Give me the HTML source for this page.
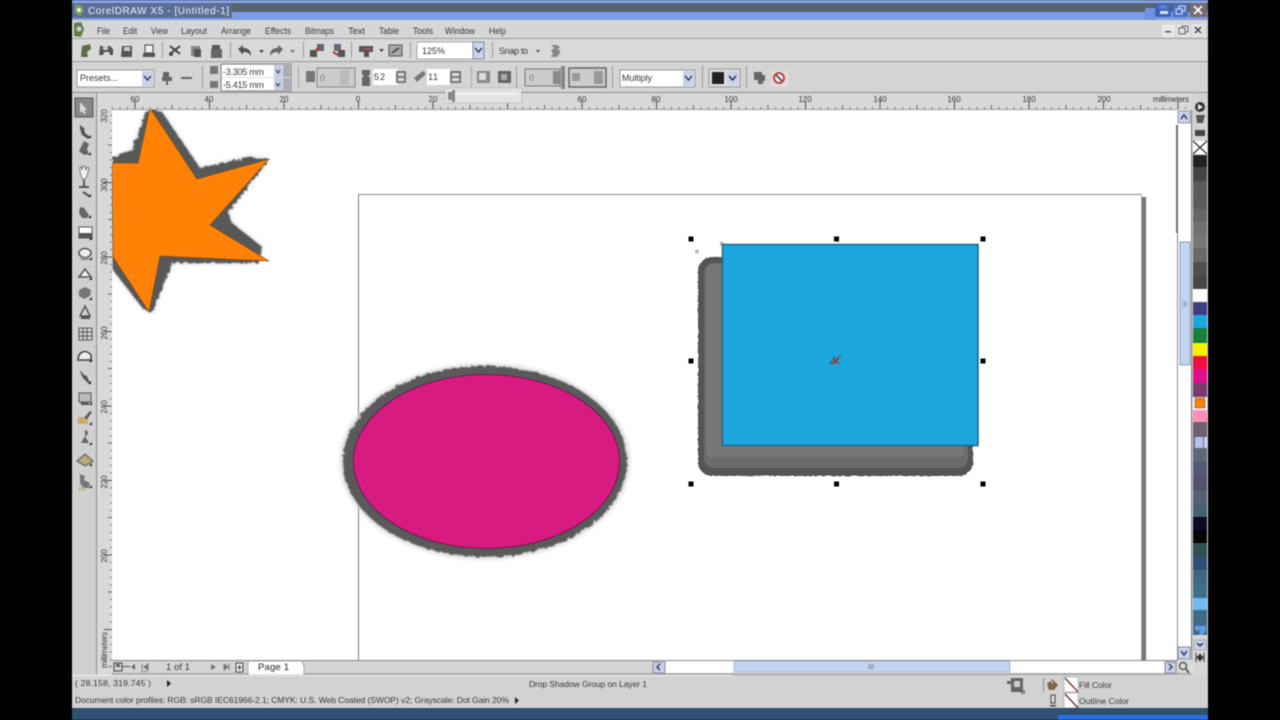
<!DOCTYPE html>
<html><head><meta charset="utf-8"><title>CorelDRAW X5</title>
<style>
html,body{margin:0;padding:0;background:#000;width:1280px;height:720px;overflow:hidden}
svg{display:block;filter:blur(.5px)}
text{font-family:"Liberation Sans",sans-serif;font-size:9px;fill:#383838}
.g{fill:#555}.d{fill:#444}.l{fill:#8a8a8a}
.s{stroke:#a0a0a0;stroke-width:1}
</style></head><body>
<svg width="1280" height="720" viewBox="0 0 1280 720" xmlns="http://www.w3.org/2000/svg">
<defs>
<filter id="rough" x="-10%" y="-10%" width="120%" height="120%">
<feTurbulence type="fractalNoise" baseFrequency=".25" numOctaves="2" seed="4"/>
<feDisplacementMap in="SourceGraphic" scale="5"/>
<feGaussianBlur stdDeviation=".5"/>
</filter>
<filter id="rough2" x="-5%" y="-5%" width="110%" height="110%">
<feTurbulence type="fractalNoise" baseFrequency=".4" numOctaves="2" seed="7"/>
<feDisplacementMap in="SourceGraphic" scale="2"/>
</filter>
<filter id="soft" x="-10%" y="-10%" width="120%" height="120%"><feGaussianBlur stdDeviation="2.5"/></filter>
<clipPath id="cv"><rect x="112" y="110" width="1066" height="550"/></clipPath>
<pattern id="rh" width="74.5" height="18" patternUnits="userSpaceOnUse" patternTransform="translate(358,92)">
<rect x="0" y="9" width="1" height="8" fill="#555"/><rect x="37" y="13" width="1" height="4" fill="#666"/>
<rect x="7.5" y="15" width="1" height="2" fill="#777"/><rect x="15" y="15" width="1" height="2" fill="#777"/><rect x="22.5" y="15" width="1" height="2" fill="#777"/><rect x="30" y="15" width="1" height="2" fill="#777"/><rect x="44.5" y="15" width="1" height="2" fill="#777"/><rect x="52" y="15" width="1" height="2" fill="#777"/><rect x="59.5" y="15" width="1" height="2" fill="#777"/><rect x="67" y="15" width="1" height="2" fill="#777"/>
</pattern>
<pattern id="rv" width="16" height="74.5" patternUnits="userSpaceOnUse" patternTransform="translate(96,182)">
<rect x="8" y="0" width="8" height="1" fill="#555"/><rect x="12" y="37" width="4" height="1" fill="#666"/>
<rect x="14" y="7.5" width="2" height="1" fill="#777"/><rect x="14" y="15" width="2" height="1" fill="#777"/><rect x="14" y="22.5" width="2" height="1" fill="#777"/><rect x="14" y="30" width="2" height="1" fill="#777"/><rect x="14" y="44.5" width="2" height="1" fill="#777"/><rect x="14" y="52" width="2" height="1" fill="#777"/><rect x="14" y="59.5" width="2" height="1" fill="#777"/><rect x="14" y="67" width="2" height="1" fill="#777"/>
</pattern>
</defs>

<rect width="1280" height="720" fill="#000"/>
<rect x="72" y="0" width="1136" height="720" fill="#d3d3d3"/>

<!-- title bar -->
<rect x="72" y="0" width="1136" height="3" fill="#86a5ea"/>
<rect x="72" y="3" width="1136" height="9" fill="#56636f"/>
<rect x="72" y="12" width="1136" height="8" fill="#7c9ce8"/>
<rect x="72" y="3" width="160" height="15" fill="#5b6f94"/>
<rect x="1145" y="8" width="10" height="12" fill="#6f93e0"/>
<path d="M75 4l7 2 2 5-4 5-5-3z" fill="#7da05a"/><circle cx="79" cy="10" r="2" fill="#eee"/>
<text x="88" y="14" style="font-size:10px;fill:#eef" textLength="141">CorelDRAW X5 - [Untitled-1]</text>
<rect x="1155" y="4" width="16" height="13" fill="#3f62b4"/><rect x="1160" y="11" width="8" height="3" fill="#dde"/><rect x="1159" y="5" width="8" height="4" fill="#5a7fd0"/>
<rect x="1173" y="4" width="15" height="13" fill="#4a6fc4"/><rect x="1179" y="6" width="6" height="5" fill="none" stroke="#dde"/><rect x="1176" y="9" width="6" height="5" fill="#4a6fc4" stroke="#dde"/>
<rect x="1190" y="3" width="17" height="14" fill="#7b6a70"/><path d="M1194 6l8 8M1202 6l-8 8" stroke="#fff" stroke-width="1.6"/>

<!-- menu bar -->
<rect x="72" y="20" width="1136" height="18" fill="#d6d6d6"/>
<path d="M74 23l7-1 3 7-3 8-7-1z" fill="#5f7d46"/><circle cx="79" cy="29" r="2.5" fill="#ccd"/>
<text x="97" y="34" style="font-size:9.5px" textLength="13" lengthAdjust="spacingAndGlyphs">File</text>
<text x="123" y="34" style="font-size:9.5px" textLength="14" lengthAdjust="spacingAndGlyphs">Edit</text>
<text x="151" y="34" style="font-size:9.5px" textLength="17" lengthAdjust="spacingAndGlyphs">View</text>
<text x="181" y="34" style="font-size:9.5px" textLength="26" lengthAdjust="spacingAndGlyphs">Layout</text>
<text x="221" y="34" style="font-size:9.5px" textLength="30" lengthAdjust="spacingAndGlyphs">Arrange</text>
<text x="265" y="34" style="font-size:9.5px" textLength="26" lengthAdjust="spacingAndGlyphs">Effects</text>
<text x="305" y="34" style="font-size:9.5px" textLength="29" lengthAdjust="spacingAndGlyphs">Bitmaps</text>
<text x="348" y="34" style="font-size:9.5px" textLength="17" lengthAdjust="spacingAndGlyphs">Text</text>
<text x="379" y="34" style="font-size:9.5px" textLength="20" lengthAdjust="spacingAndGlyphs">Table</text>
<text x="413" y="34" style="font-size:9.5px" textLength="20" lengthAdjust="spacingAndGlyphs">Tools</text>
<text x="445" y="34" style="font-size:9.5px" textLength="30" lengthAdjust="spacingAndGlyphs">Window</text>
<text x="489" y="34" style="font-size:9.5px" textLength="17" lengthAdjust="spacingAndGlyphs">Help</text>
<rect x="1162" y="24" width="13" height="13" fill="#e9e6ea"/><rect x="1165" y="31" width="6" height="1.5" fill="#555"/>
<rect x="1177" y="24" width="13" height="13" fill="#e4e4e6"/><rect x="1182" y="26" width="6" height="6" fill="none" stroke="#666"/><rect x="1179" y="28" width="6" height="6" fill="#e4e4e6" stroke="#666"/>
<rect x="1192" y="24" width="13" height="13" fill="#e2e2e4"/><path d="M1195 27l6 6M1201 27l-6 6" stroke="#444" stroke-width="1.5"/>

<!-- toolbar 1 -->
<rect x="72" y="38" width="1136" height="1" fill="#9e9e9e"/>
<rect x="72" y="39" width="1136" height="22" fill="#d9d9d9"/>
<rect x="72" y="61" width="1136" height="1" fill="#9a9a9a"/>
<path d="M82 46l8-2 1 5-4 3 1 5-7 0z" fill="#5c6b4a"/>
<path d="M100 46h10l3 3v6h-3l-1-3h-5l-1 3h-4z" class="g"/><rect x="103" y="46" width="5" height="4" fill="#ccc"/>
<path d="M122 46h10v11h-11z" class="g"/><rect x="124" y="47" width="6" height="4" fill="#ccc"/>
<rect x="143" y="53" width="12" height="4" class="g"/><rect x="145" y="45" width="8" height="8" fill="#eee" stroke="#444"/>
<rect x="162" y="42" width="1" height="16" fill="#999"/>
<path d="M170 46l10 8M180 46l-10 8" stroke="#444" stroke-width="2"/><circle cx="171" cy="54" r="2" class="d"/>
<rect x="191" y="46" width="9" height="10" class="l"/><rect x="194" y="49" width="7" height="8" fill="#555"/>
<rect x="212" y="45" width="8" height="5" class="g"/><rect x="211" y="49" width="11" height="9" fill="#666"/>
<rect x="230" y="42" width="1" height="16" fill="#999"/>
<path d="M238 49l5-4v3c6 0 8 3 8 8-2-3-4-4-8-4v3z" class="g"/><path d="M259 50h5l-2.500 3z" class="d"/>
<path d="M283 49l-5-4v3c-6 0-8 3-8 8 2-3 4-4 8-4v3z" fill="#666"/><path d="M290 50h5l-2.500 3z" fill="#777"/>
<rect x="303" y="42" width="1" height="16" fill="#999"/>
<rect x="317" y="44" width="7" height="7" fill="#667"/><rect x="310" y="50" width="7" height="7" fill="#555"/><path d="M316 50l3-3" stroke="#b33" stroke-width="2"/>
<rect x="334" y="44" width="7" height="7" fill="#667"/><rect x="338" y="50" width="7" height="7" fill="#555"/><path d="M333 52l5 3" stroke="#b33" stroke-width="2"/>
<rect x="351" y="42" width="1" height="16" fill="#999"/>
<path d="M359 46h14v6h-4v5h-5v-5h-5z" class="g"/><rect x="363" y="48" width="8" height="2" fill="#a55"/><path d="M379 49h5l-2.500 3z" class="d"/>
<rect x="389" y="45" width="13" height="11" fill="#aaa" stroke="#555"/><path d="M392 53l4-3 3-2" stroke="#555" stroke-width="2" fill="none"/>
<rect x="410" y="42" width="1" height="16" fill="#999"/>
<rect x="417" y="42" width="56" height="17" fill="#fff" stroke="#aaa"/>
<text x="422" y="54" textLength="23">125%</text>
<rect x="473" y="42" width="11" height="17" fill="#cbd3ea" stroke="#889"/><path d="M475 48l3.500 4 3.500-4" fill="none" stroke="#345" stroke-width="1.5"/>
<rect x="492" y="42" width="1" height="16" fill="#999"/>
<text x="499" y="54" textLength="29">Snap to</text>
<path d="M536 50h4l-2 2.500z" class="d"/>
<path d="M551 45h6l3 2-3 3h3v3l-3 4h-6l2-4-2-2 3-3z" fill="#888"/>

<!-- toolbar 2 -->
<rect x="72" y="62" width="1136" height="30" fill="#d4d4d4"/>
<rect x="77" y="70" width="77" height="17" fill="#fff" stroke="#999"/>
<text x="80" y="81" textLength="38">Presets...</text>
<rect x="142" y="71" width="11" height="15" fill="#c9d1e8"/><path d="M144 76l3.500 4 3.500-4" fill="none" stroke="#345" stroke-width="1.5"/>
<path d="M163 72h6v5h3v4h-4v4h-2v-4h-4v-4h1z" fill="#666"/>
<rect x="181" y="77" width="11" height="2" fill="#666"/>
<rect x="202" y="66" width="1" height="22" fill="#999"/>
<rect x="210" y="66" width="8" height="8" fill="#777"/><rect x="210" y="81" width="8" height="7" fill="#777"/>
<rect x="221" y="64" width="70" height="27" fill="#ddd" stroke="#888"/>
<rect x="222" y="65" width="52" height="12" fill="#fff"/><rect x="222" y="78" width="52" height="12" fill="#fff"/>
<text x="223" y="75" textLength="41">-3.305 mm</text>
<text x="223" y="88" textLength="41">-5.415 mm</text>
<rect x="274" y="65" width="8" height="12" fill="#c2cbe4"/><rect x="274" y="78" width="8" height="12" fill="#c2cbe4"/>
<rect x="283" y="65" width="7" height="12" fill="#aab"/><rect x="283" y="78" width="7" height="12" fill="#aab"/>
<path d="M276 70l2 3 2-3M276 83l2 3 2-3" stroke="#234" fill="none"/>
<rect x="298" y="66" width="1" height="22" fill="#aaa"/>
<rect x="306" y="71" width="9" height="11" fill="#777"/>
<rect x="317" y="68" width="38" height="19" fill="#ccc" stroke="#888"/><rect x="340" y="70" width="9" height="15" fill="#bbb"/>
<text x="320" y="81" style="fill:#777">0</text>
<path d="M362 70h8v4l-2 3h2v9h-8v-9h2l-2-3z" fill="#666"/>
<rect x="373" y="69" width="25" height="16" fill="#fff"/><text x="374" y="80" textLength="11">52</text>
<rect x="396" y="71" width="10" height="12" fill="#777"/><rect x="398" y="73" width="6" height="3" fill="#ddd"/><rect x="398" y="78" width="6" height="3" fill="#ddd"/>
<path d="M414 78l9-7 3 3-9 8z" fill="#777"/>
<rect x="427" y="69" width="23" height="16" fill="#fff"/><text x="428" y="80" textLength="10">11</text>
<rect x="450" y="71" width="11" height="12" fill="#777"/><rect x="452" y="73" width="7" height="3" fill="#ddd"/><rect x="452" y="78" width="7" height="3" fill="#ddd"/>
<rect x="471" y="66" width="1" height="22" fill="#aaa"/>
<rect x="477" y="71" width="13" height="12" fill="#888"/><rect x="479" y="73" width="7" height="7" fill="#ddd"/>
<rect x="498" y="71" width="13" height="12" fill="#666"/><rect x="501" y="74" width="6" height="6" fill="#aaa"/>
<rect x="516" y="66" width="1" height="22" fill="#999"/>
<rect x="525" y="69" width="35" height="17" fill="#ccc" stroke="#777"/><rect x="553" y="71" width="7" height="13" fill="#888"/><text x="529" y="81" style="fill:#777">0</text>
<rect x="561" y="66" width="4" height="23" fill="#888"/>
<rect x="569" y="68" width="37" height="19" fill="#ccc" stroke="#666" stroke-width="1.500"/><rect x="594" y="71" width="9" height="13" fill="#999"/><rect x="572" y="73" width="8" height="8" fill="#999"/>
<rect x="612" y="66" width="1" height="22" fill="#999"/>
<rect x="620" y="70" width="75" height="17" fill="#fff" stroke="#999"/>
<text x="622" y="81" textLength="30">Multiply</text>
<rect x="683" y="71" width="11" height="15" fill="#c9d1e8"/><path d="M685 76l3.500 4 3.500-4" fill="none" stroke="#345" stroke-width="1.5"/>
<rect x="702" y="66" width="1" height="22" fill="#999"/>
<rect x="709" y="69" width="31" height="18" fill="#ddd" stroke="#999"/>
<rect x="712" y="72" width="12" height="12" fill="#222"/>
<rect x="727" y="71" width="11" height="14" fill="#c9d1e8"/><path d="M729 76l3.500 4 3.500-4" fill="none" stroke="#235" stroke-width="1.5"/>
<rect x="746" y="66" width="1" height="22" fill="#999"/>
<path d="M754 72h8v3h3v6h-2v3h-5v-4h-4z" fill="#666"/>
<rect x="771" y="70" width="17" height="17" fill="#e4d8d8"/><circle cx="779" cy="78" r="5" fill="#eee" stroke="#b33" stroke-width="1.800"/><path d="M776 75l6 6" stroke="#333" stroke-width="1.500"/>

<!-- ruler -->
<rect x="72" y="92" width="1136" height="1" fill="#8e8e8e"/>
<rect x="96" y="93" width="1096" height="16" fill="#d8d8d8"/>
<rect x="112" y="92" width="1080" height="17" fill="url(#rh)"/>
<rect x="96" y="109" width="1082" height="1" fill="#999"/>
<g text-anchor="middle">
<text x="135" y="102" style="font-size:8px">60</text><text x="209" y="102" style="font-size:8px">40</text><text x="284" y="102" style="font-size:8px">20</text><text x="358" y="102" style="font-size:8px">0</text><text x="433" y="102" style="font-size:8px">20</text><text x="582" y="102" style="font-size:8px">60</text><text x="656" y="102" style="font-size:8px">80</text><text x="731" y="102" style="font-size:8px">100</text><text x="805" y="102" style="font-size:8px">120</text><text x="880" y="102" style="font-size:8px">140</text><text x="954" y="102" style="font-size:8px">160</text><text x="1029" y="102" style="font-size:8px">180</text><text x="1104" y="102" style="font-size:8px">200</text>
</g>
<text x="1153" y="102" style="font-size:8px" textLength="36">millimeters</text>
<rect x="445" y="88" width="77" height="15" fill="#e2e2e2" stroke="#aaa" stroke-dasharray="1 1"/>
<rect x="452" y="93" width="66" height="2" fill="#f2f2f2"/>
<path d="M448 92h4v-2h3v12h-3v-2h-4z" fill="#888"/>

<!-- left ruler and toolbox -->
<rect x="72" y="93" width="24" height="582" fill="#d0d0d0"/>
<rect x="96" y="93" width="1" height="582" fill="#8c8c8c"/>
<rect x="97" y="109" width="15" height="566" fill="#d8d8d8"/>
<rect x="96" y="109" width="16" height="563" fill="url(#rv)"/>
<text transform="translate(107,116) rotate(-90)" style="font-size:8px" text-anchor="middle">320</text>
<text transform="translate(107,185) rotate(-90)" style="font-size:8px" text-anchor="middle">300</text>
<text transform="translate(107,258) rotate(-90)" style="font-size:8px" text-anchor="middle">280</text>
<text transform="translate(107,333) rotate(-90)" style="font-size:8px" text-anchor="middle">260</text>
<text transform="translate(107,407) rotate(-90)" style="font-size:8px" text-anchor="middle">240</text>
<text transform="translate(107,482) rotate(-90)" style="font-size:8px" text-anchor="middle">220</text>
<text transform="translate(107,556) rotate(-90)" style="font-size:8px" text-anchor="middle">200</text>
<text transform="translate(107,668) rotate(-90)" style="font-size:8px" textLength="36">millimeters</text>
<rect x="75" y="98" width="18" height="19" fill="#888" stroke="#555"/><path d="M80 102l7 8-3 0 2 3-2 1-2-3-2 2z" fill="#ddd"/>
<g>
<path d="M80 125l4 3 1 5 5 4-2 2-6-4-2-6z" class="g"/><path d="M88 138h3v-3z" fill="#222"/>
<path d="M84 141l5 3-2 5 2 5-5 1-5-4z" fill="#666"/><path d="M88 155h3v-3z" fill="#222"/>
<path d="M80 172v-5h2v3l1-4h2l1 4 1-3 2 1-2 8-2 3h-3z" fill="#f0f0f0" stroke="#555" stroke-width=".7"/>
<path d="M84 180v8M79 187h10M83 192l6 4" stroke="#555" stroke-width="2" fill="none"/><path d="M88 197h3v-3z" fill="#222"/>
<path d="M80 207l4 1 5 7-2 3h-5l-3-5z" fill="#666"/><path d="M88 218h3v-3z" fill="#222"/>
<rect x="79" y="227" width="13" height="11" fill="#fff" stroke="#555"/><rect x="79" y="233" width="13" height="5" class="g"/><path d="M89 240h3v-3z" fill="#222"/>
<ellipse cx="85" cy="253" rx="6" ry="4.500" fill="#eee" stroke="#555" stroke-width="1.500"/><rect x="81" y="257" width="8" height="3" class="l"/><path d="M89 260h3v-3z" fill="#222"/>
<path d="M79 277l6-8 6 8z" fill="#eee" stroke="#555" stroke-width="1.500"/><path d="M89 280h3v-3z" fill="#222"/>
<path d="M79 290l6-3 6 3-1 6-6 3-5-3z" fill="#777"/><path d="M89 300h3v-3z" fill="#222"/>
<path d="M85 306l5 10H80z" fill="none" stroke="#555" stroke-width="1.500"/><rect x="81" y="316" width="9" height="3" class="g"/>
<path d="M79 328h13v12H79zM79 332h13M79 336h13M83 328v12M87 328v12" fill="none" stroke="#555"/>
<path d="M78 361c0-10 8-12 13-6v5H78z" fill="#eee" stroke="#444" stroke-width="1.500"/><path d="M89 362h3v-3z" fill="#222"/>
<path d="M80 370l4 5 3 1 2 5 2 1-3 1-5-5-2-4z" fill="#555"/><path d="M88 384h3v-3z" fill="#222"/>
<rect x="79" y="393" width="12" height="9" fill="#bbb" stroke="#555"/><rect x="81" y="402" width="8" height="3" class="g"/><path d="M89 405h3v-3z" fill="#222"/>
<path d="M78 417h10v7H78z" fill="#c9ac6c"/><path d="M84 418l6-7 2 1-5 7z" fill="#555"/><path d="M89 425h3v-3z" fill="#222"/>
<path d="M85 430a3 3 0 1 1 0 6l4 7H81l4-7z" fill="#666"/><path d="M89 445h3v-3z" fill="#222"/>
<path d="M77 461l8-7 8 7-8 5z" fill="#b9a878" stroke="#555"/><path d="M89 466h3v-3z" fill="#222"/>
<path d="M80 474l5 2-1 4 6 3-1 5h-6l-3-5z" fill="#777"/><path d="M78 489l8 0" stroke="#c9b98a" stroke-width="3"/><path d="M89 488h3v-3z" fill="#222"/>
</g>

<!-- canvas -->
<rect x="112" y="110" width="1066" height="550" fill="#fff"/>
<rect x="1178" y="110" width="14" height="550" fill="#fff"/>

<!-- page -->
<rect x="358" y="194" width="1" height="466" fill="#777"/>
<rect x="358" y="194" width="783" height="1" fill="#888"/>
<rect x="1141" y="194" width="1" height="466" fill="#aaa"/>
<rect x="1142" y="197" width="4" height="464" fill="#747474"/>

<!-- star -->
<g clip-path="url(#cv)">
<polygon points="150,108 162,112 200,168 249,157 269,159 228,213 232,223 262,247 258,263 172,263 152,312 144,310 113,270 113,158 132,150 144,117" fill="#ccc" filter="url(#soft)"/>
<polygon points="150,108 162,112 200,168 249,157 269,159 228,213 232,223 262,247 258,263 172,263 152,312 144,310 113,270 113,158 132,150 144,117" fill="#585858" filter="url(#rough)"/>
<polygon points="150,108 197,179 269,159 210,225 269,261 160,256 149,312 113,257 112,163 138,163" fill="#ff8207" stroke="#7a4a1a" stroke-width=".7"/>
</g>

<!-- ellipse -->
<ellipse cx="485" cy="461.500" rx="144" ry="97" fill="#ccc" filter="url(#soft)"/>
<ellipse cx="485" cy="461.500" rx="142" ry="95.500" fill="#5a5a5a" filter="url(#rough)"/>
<ellipse cx="486.500" cy="461.500" rx="133" ry="87" fill="#d81b80" stroke="#6a1050" stroke-width=".8"/>

<!-- rectangle -->
<rect x="698" y="257" width="275" height="219" rx="14" fill="#555" filter="url(#rough2)"/>
<rect x="704" y="263" width="264" height="205" rx="10" fill="#6c6c6c"/>
<rect x="706" y="264" width="258" height="193" rx="6" fill="#777"/>
<rect x="722.500" y="244.500" width="255.500" height="201" fill="#1ca6de" stroke="#1d6a85" stroke-width="1.500"/>
<path d="M835 356l-5 8M841 355l-10 9" stroke="#556" stroke-width="1"/><path d="M833 358l6 6M839 358l-6 6" stroke="#a33" stroke-width="1.500"/>
<circle cx="697" cy="251.500" r="1.300" fill="none" stroke="#666" stroke-width=".7"/>
<circle cx="722" cy="244" r="1.500" fill="none" stroke="#666" stroke-width=".7"/>
<g fill="#000">
<rect x="688.500" y="236.500" width="5" height="5"/><rect x="834" y="236.500" width="5" height="5"/><rect x="980.500" y="236.500" width="5" height="5"/>
<rect x="688.500" y="358.500" width="5" height="5"/><rect x="980.500" y="358.500" width="5" height="5"/>
<rect x="688.500" y="481.500" width="5" height="5"/><rect x="834" y="481.500" width="5" height="5"/><rect x="980.500" y="481.500" width="5" height="5"/>
</g>

<!-- vertical scrollbar -->
<rect x="1176" y="125" width="2" height="108" fill="#6e6e6e"/>
<rect x="1177" y="233" width="1" height="427" fill="#888"/>
<rect x="1178" y="111" width="12" height="12" fill="#c8d2ee" stroke="#99a"/><path d="M1181 119l3-4 3 4" fill="none" stroke="#345" stroke-width="1.500"/>
<rect x="1180" y="242" width="10" height="123" fill="#c2d6f4" stroke="#6a7a8a" stroke-width=".7"/>
<path d="M1183 302h4M1183 304h4M1183 306h4" stroke="#889" stroke-width="1"/>
<rect x="1178" y="647" width="12" height="12" fill="#c8d2ee" stroke="#889"/><path d="M1181 651l3 4 3-4" fill="none" stroke="#345" stroke-width="1.500"/>

<!-- horizontal scrollbar area -->
<rect x="112" y="660" width="1066" height="1" fill="#888"/>
<rect x="112" y="661" width="548" height="14" fill="#d4d4d4"/>
<rect x="660" y="661" width="505" height="12" fill="#fff"/>
<rect x="1165" y="661" width="27" height="15" fill="#d8d8d8"/>
<rect x="1190" y="661" width="3" height="15" fill="#ddd"/>
<rect x="734" y="661" width="276" height="11" fill="#c2d6f4" stroke="#8a98a8" stroke-width=".6"/>
<path d="M869 664v5M871 664v5M873 664v5" stroke="#889"/>
<rect x="112" y="673" width="1080" height="2" fill="#8a8a8a" opacity=".55"/>
<rect x="653" y="662" width="12" height="11" fill="#c8d0e8" stroke="#889"/><path d="M660 664l-3 3 3 3" fill="none" stroke="#345" stroke-width="1.500"/>
<rect x="1165" y="662" width="11" height="11" fill="#c8d0e8" stroke="#889"/><path d="M1169 664l3 3-3 3" fill="none" stroke="#345" stroke-width="1.500"/>
<circle cx="1183" cy="666" r="3.500" fill="none" stroke="#444" stroke-width="1.200"/><path d="M1186 669l3 4" stroke="#444" stroke-width="1.500"/>

<!-- page nav -->
<rect x="114" y="663" width="8" height="8" fill="none" stroke="#444"/><rect x="116" y="664" width="4" height="3" fill="#666"/>
<rect x="122" y="666" width="8" height="1" fill="#555"/><path d="M135 664l-4 3 4 3z" fill="#666"/>
<path d="M142 664v6M148 664l-4 3 4 3z" stroke="#777" fill="#777"/><rect x="141" y="671" width="7" height="1" fill="#888"/>
<text x="166" y="670" style="font-size:9.500px" textLength="24">1 of 1</text>
<path d="M211 664l5 3-5 3z" fill="#777"/><path d="M224 664l4 3-4 3zM229 664v6" fill="#777" stroke="#777"/>
<rect x="236" y="663" width="7" height="9" fill="#eee" stroke="#444"/><path d="M239.500 665v5M237.500 667.500h4" stroke="#333"/>
<path d="M248 661h54l2 6v8h-56z" fill="#fff" stroke="#999" stroke-width=".8"/>
<text x="258" y="670" style="font-size:9.500px;fill:#222" textLength="31">Page 1</text>
<rect x="72" y="675" width="660" height="1.500" fill="#f2f2f2"/>

<!-- palette -->
<rect x="1191" y="110" width="1" height="550" fill="#777"/>
<rect x="1192" y="93" width="16" height="47" fill="#d2d2d2"/>
<circle cx="1200" cy="107" r="5" fill="#333"/><path d="M1198 104l5 3-5 3z" fill="#eee"/>
<path d="M1196 115h9l-2 8h-6z" fill="#555"/>
<path d="M1195 130h10v6h-10zM1197 127l2 3" class="d"/>
<rect x="1193" y="141" width="14" height="13" fill="#fff"/><path d="M1193 141l14 13M1207 141l-14 13" stroke="#333" stroke-width="1.200"/>
<g>
<rect x="1193" y="155" width="14" height="12" fill="#222"/>
<rect x="1193" y="167" width="14" height="14" fill="#444"/>
<rect x="1193" y="181" width="14" height="14" fill="#5b5b5b"/>
<rect x="1193" y="195" width="14" height="14" fill="#5e5a60"/>
<rect x="1193" y="209" width="14" height="13" fill="#666"/>
<rect x="1193" y="222" width="14" height="13" fill="#707070"/>
<rect x="1193" y="235" width="14" height="13" fill="#777"/>
<rect x="1193" y="248" width="14" height="14" fill="#6a6a6a"/>
<rect x="1193" y="262" width="14" height="14" fill="#4f4f4f"/>
<rect x="1193" y="276" width="14" height="13" fill="#484848"/>
<rect x="1193" y="289" width="14" height="13" fill="#fff"/>
<rect x="1193" y="302" width="14" height="13" fill="#3f3f80"/>
<rect x="1193" y="315" width="14" height="13" fill="#1aa7e0"/>
<rect x="1193" y="328" width="14" height="15" fill="#1a8040"/>
<rect x="1193" y="343" width="14" height="13" fill="#ffee00"/>
<rect x="1193" y="356" width="14" height="13" fill="#f01040"/>
<rect x="1193" y="369" width="14" height="14" fill="#e0108c"/>
<rect x="1193" y="383" width="14" height="14" fill="#7a3a70"/>
<rect x="1193" y="397" width="14" height="13" fill="#fff"/>
<rect x="1195" y="398" width="10" height="10" fill="#ff8207" stroke="#555" stroke-width=".6"/>
<rect x="1193" y="410" width="14" height="12" fill="#ff8fb8"/>
<rect x="1193" y="422" width="14" height="15" fill="#6e5f72"/>
<rect x="1193" y="437" width="14" height="11" fill="#707080"/>
<rect x="1195" y="437" width="8" height="11" fill="#b8c0f0"/>
<rect x="1204" y="437" width="3" height="11" fill="#c8ccf0"/>
<rect x="1193" y="448" width="14" height="14" fill="#606878"/>
<rect x="1193" y="462" width="14" height="13" fill="#505a78"/>
<rect x="1193" y="475" width="14" height="15" fill="#554f70"/>
<rect x="1193" y="490" width="14" height="13" fill="#556070"/>
<rect x="1193" y="503" width="14" height="14" fill="#456070"/>
<rect x="1193" y="517" width="14" height="13" fill="#0a0a20"/>
<rect x="1193" y="530" width="14" height="13" fill="#050508"/>
<rect x="1193" y="543" width="14" height="14" fill="#2f4f50"/>
<rect x="1193" y="557" width="14" height="13" fill="#2f4f78"/>
<rect x="1193" y="570" width="14" height="13" fill="#3f6880"/>
<rect x="1193" y="583" width="14" height="15" fill="#407088"/>
<rect x="1193" y="598" width="14" height="12" fill="#70b8f0"/>
<rect x="1193" y="610" width="14" height="15" fill="#3f6a88"/>
<rect x="1193" y="625" width="14" height="10" fill="#3f6a88"/>
<path d="M1195 626h11v4l-3 5h-4l1-4-5-1z" fill="#5f9ee0"/>
</g>
<rect x="1193" y="635" width="14" height="41" fill="#d6d6d6"/>
<rect x="1194" y="640" width="12" height="10" fill="#c8d0e8" stroke="#889" stroke-width=".6"/><path d="M1197 643l3 3 3-3" fill="none" stroke="#234" stroke-width="1.500"/>
<path d="M1196 653v9M1204 653v9M1197 657.500l3-3v6zM1203 657.500l-3-3v6z" stroke="#333" fill="#333"/>

<!-- status bar -->
<rect x="72" y="676" width="1136" height="32" fill="#d2d2d2"/>
<text x="75" y="686" style="font-size:8.500px" textLength="76">( 28.158, 319.745 )</text>
<path d="M167 680l4 3.500-4 3.500z" fill="#222"/>
<text x="529" y="687" style="font-size:8.500px" textLength="118">Drop Shadow Group on Layer 1</text>
<text x="75" y="703" style="font-size:8.500px" textLength="434">Document color profiles: RGB: sRGB IEC61966-2.1; CMYK: U.S. Web Coated (SWOP) v2; Grayscale: Dot Gain 20%</text>
<path d="M515 697l4 3.500-4 3.500z" fill="#222"/>
<rect x="1007" y="681" width="4" height="3" fill="#666"/><rect x="1011" y="678" width="12" height="14" fill="#666"/><rect x="1014" y="681" width="6" height="6" fill="#ccc"/><circle cx="1023" cy="692" r="1.500" fill="none" stroke="#555"/>
<rect x="1043" y="678" width="1" height="14" fill="#888"/>
<path d="M1047 684l5-5 6 6-4 5h-5z" fill="#7a6a4a"/><path d="M1050 680l3 3" stroke="#eee"/>
<rect x="1064" y="677" width="14" height="15" fill="#fff" stroke="#999" stroke-width=".6"/><path d="M1065 678l13 14" stroke="#7a3030" stroke-width="1.300"/>
<text x="1079" y="688" style="font-size:8.500px" textLength="33">Fill Color</text>
<path d="M1051 695h4v8h-4z" fill="#ddd" stroke="#444"/><rect x="1050" y="705" width="6" height="1.500" fill="#444"/>
<rect x="1064" y="693" width="14" height="15" fill="#fff" stroke="#999" stroke-width=".6"/><path d="M1065 694l13 14" stroke="#6a2a2a" stroke-width="1.300"/>
<text x="1079" y="704" style="font-size:8.500px" textLength="50">Outline Color</text>

<!-- taskbar -->
<rect x="72" y="708" width="1136" height="12" fill="#2f5070"/>
<rect x="1058" y="715" width="150" height="5" fill="#2a6fe0"/>
</svg>
</body></html>
